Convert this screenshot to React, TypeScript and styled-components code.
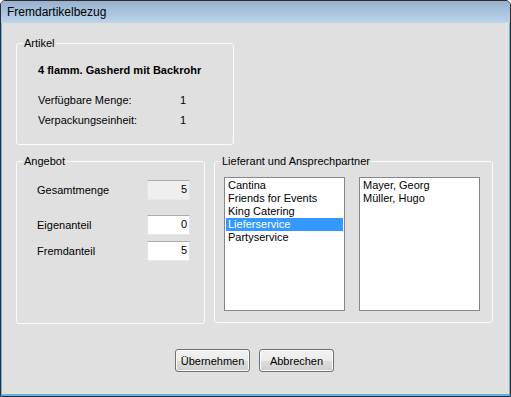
import React from "react";
import styled, { createGlobalStyle } from "styled-components";

const Global = createGlobalStyle`
  html, body { margin: 0; padding: 0; background: #ffffff; }
  body { font-family: "Liberation Sans", Arial, sans-serif; font-size: 11px; color: #000; }
  * { box-sizing: border-box; }
`;

const Window = styled.div`
  width: 511px;
  height: 397px;
  border: 1px solid #2e2e2e;
  border-radius: 5px 5px 0 0;
  overflow: hidden;
  display: flex;
  flex-direction: column;
  background: #e0e0e0;
`;

const TitleBar = styled.div`
  height: 22px;
  flex: none;
  display: flex;
  align-items: center;
  padding: 1px 0 0 6px;
  background: linear-gradient(#98b2cf, #bcd4ec);
`;

const Title = styled.span`
  font-size: 12px;
  color: #000;
  line-height: 15px;
`;

const Frame = styled.div`
  flex: 1;
  display: flex;
  flex-direction: column;
  border-style: solid;
  border-color: #62b4e4;
  border-width: 0 1px 2px 1px;
`;

const Body = styled.div`
  flex: 1;
  display: flex;
  flex-direction: column;
  padding: 20px 0 0 14px;
`;

const Group = styled.div<{ $w: number; $h: number; $mt?: number }>`
  position: relative;
  width: ${(p) => p.$w}px;
  height: ${(p) => p.$h}px;
  margin-top: ${(p) => p.$mt ?? 0}px;
  border: 1px solid #fbfbfb;
  border-radius: 3px;
  flex: none;
`;

const Legend = styled.span`
  position: absolute;
  top: -7px;
  left: 6px;
  padding: 0 1px;
  background: #e0e0e0;
  line-height: 13px;
  white-space: nowrap;
`;

const ArtikelContent = styled.div`
  padding: 20px 0 0 21px;
  display: grid;
  grid-template-columns: 142px auto;
  line-height: 13px;
`;

const ProductName = styled.div`
  grid-column: 1 / span 2;
  font-weight: bold;
  margin-bottom: 17px;
`;

const InfoLabel = styled.div<{ $mb?: number }>`
  margin-bottom: ${(p) => p.$mb ?? 0}px;
`;

const Row = styled.div`
  display: flex;
  align-items: flex-start;
  gap: 9px;
  margin-top: 16px;
`;

const AngebotContent = styled.div`
  padding: 18px 0 0 20px;
  display: grid;
  grid-template-columns: 110px 43px;
  align-items: center;
`;

const FieldLabel = styled.div<{ $mb?: number }>`
  line-height: 13px;
  margin-bottom: ${(p) => p.$mb ?? 0}px;
`;

const NumBox = styled.div<{ $disabled?: boolean; $mb?: number }>`
  height: 20px;
  margin-bottom: ${(p) => p.$mb ?? 0}px;
  background: ${(p) => (p.$disabled ? "#efefef" : "#ffffff")};
  border: 1px solid;
  border-color: #abadb3 #e2e3ea #e3e9ef #e2e3ea;
  text-align: right;
  padding-right: 2px;
  line-height: 17px;
`;

const ListsArea = styled.div`
  display: flex;
  gap: 14px;
  padding: 15px 0 0 9px;
`;

const ListBox = styled.div`
  width: 121px;
  height: 134px;
  background: #ffffff;
  border: 1px solid #828790;
  padding: 1px;
  display: flex;
  flex-direction: column;
`;

const ListItem = styled.div<{ $selected?: boolean }>`
  height: 13px;
  line-height: 13px;
  padding-left: 2px;
  white-space: nowrap;
  background: ${(p) => (p.$selected ? "#3399ff" : "transparent")};
  color: ${(p) => (p.$selected ? "#ffffff" : "#000000")};
`;

const ButtonRow = styled.div`
  display: flex;
  justify-content: center;
  gap: 9px;
  margin-top: 25px;
  padding-right: 16px;
`;

const Button = styled.button`
  width: 75px;
  height: 23px;
  border: 1px solid #707070;
  border-radius: 3px;
  background: linear-gradient(#f2f2f2 0%, #ebebeb 50%, #dddddd 51%, #cfcfcf 100%);
  box-shadow: inset 0 0 0 1px #fbfbfb;
  font-family: "Liberation Sans", Arial, sans-serif;
  font-size: 11px;
  color: #000;
  padding: 0;
`;

const suppliers = ["Cantina", "Friends for Events", "King Catering", "Lieferservice", "Partyservice"];
const contacts = ["Mayer, Georg", "Müller, Hugo"];

export default function App() {
  return (
    <>
      <Global />
      <Window>
        <TitleBar>
          <Title>Fremdartikelbezug</Title>
        </TitleBar>
        <Frame>
          <Body>
            <Group $w={218} $h={102}>
              <Legend>Artikel</Legend>
              <ArtikelContent>
                <ProductName>4 flamm. Gasherd mit Backrohr</ProductName>
                <InfoLabel $mb={7}>Verfügbare Menge:</InfoLabel>
                <InfoLabel $mb={7}>1</InfoLabel>
                <InfoLabel>Verpackungseinheit:</InfoLabel>
                <InfoLabel>1</InfoLabel>
              </ArtikelContent>
            </Group>
            <Row>
              <Group $w={189} $h={163}>
                <Legend>Angebot</Legend>
                <AngebotContent>
                  <FieldLabel $mb={15}>Gesamtmenge</FieldLabel>
                  <NumBox $disabled $mb={15}>5</NumBox>
                  <FieldLabel $mb={6}>Eigenanteil</FieldLabel>
                  <NumBox $mb={6}>0</NumBox>
                  <FieldLabel>Fremdanteil</FieldLabel>
                  <NumBox>5</NumBox>
                </AngebotContent>
              </Group>
              <Group $w={279} $h={162}>
                <Legend>Lieferant und Ansprechpartner</Legend>
                <ListsArea>
                  <ListBox>
                    {suppliers.map((s) => (
                      <ListItem key={s} $selected={s === "Lieferservice"}>
                        {s}
                      </ListItem>
                    ))}
                  </ListBox>
                  <ListBox>
                    {contacts.map((c) => (
                      <ListItem key={c}>{c}</ListItem>
                    ))}
                  </ListBox>
                </ListsArea>
              </Group>
            </Row>
            <ButtonRow>
              <Button>Übernehmen</Button>
              <Button>Abbrechen</Button>
            </ButtonRow>
          </Body>
        </Frame>
      </Window>
    </>
  );
}
